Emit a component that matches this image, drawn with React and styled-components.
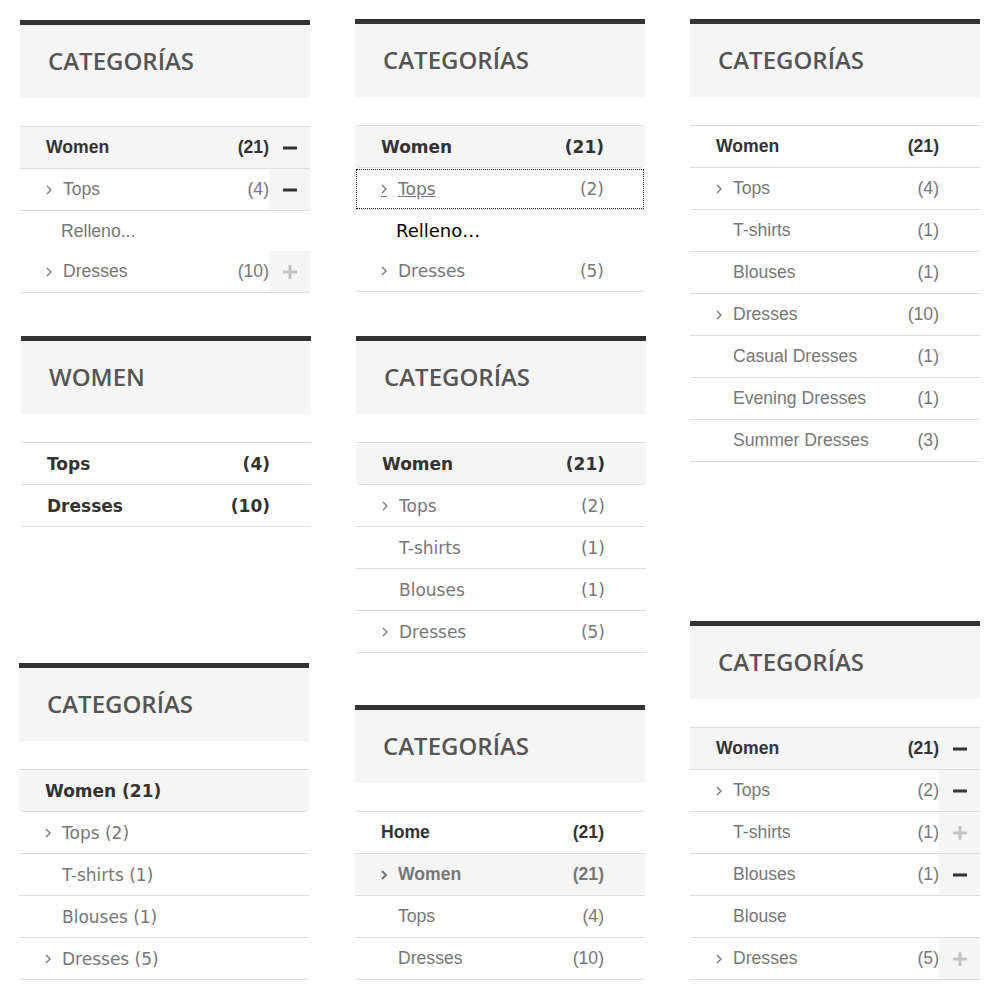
import React from "react";
import styled, { createGlobalStyle } from "styled-components";

const GlobalStyle = createGlobalStyle`
  html, body {
    margin: 0;
    padding: 0;
    background: #fff;
  }
  body {
    font-family: "Liberation Sans", Arial, sans-serif;
  }
`;

const FONTS = {
  arial: { family: `"Liberation Sans", Arial, sans-serif`, size: 17.6 },
  verdana: { family: `"DejaVu Sans", Verdana, sans-serif`, size: 17 },
};

const Page = styled.div`
  display: flex;
  align-items: flex-start;
  gap: 45px;
  padding: 0 20px;
`;

const Column = styled.div`
  display: flex;
  flex-direction: column;
  width: 290px;
`;

const Widget = styled.section`
  width: 290px;
  margin-top: ${(p) => p.$mt}px;
  margin-left: ${(p) => p.$ml || 0}px;
`;

const WidgetTitle = styled.h3`
  box-sizing: border-box;
  display: flex;
  align-items: center;
  height: 78px;
  margin: 0;
  padding: 0 28px 3px;
  border-top: 5px solid #333;
  background: #f5f5f5;
  font: 600 24px "Open Sans", "DejaVu Sans", sans-serif;
  color: #555;
  text-transform: uppercase;
`;

const List = styled.ul`
  list-style: none;
  margin: 28px 0 0;
  padding: 0;
  border-top: 1px solid #ddd;
  font-family: ${(p) => FONTS[p.$font].family};
  font-size: ${(p) => FONTS[p.$font].size}px;
`;

const Row = styled.li`
  display: flex;
  align-items: center;
  height: ${(p) => (p.$plain ? 40 : 41)}px;
  padding-left: 26px;
  border-bottom: ${(p) => (p.$plain ? "none" : "1px solid #ddd")};
  border-radius: ${(p) => (p.$rounded ? "5px" : "0")};
  background: ${(p) => (p.$active || p.$rounded ? "#f5f5f5" : "transparent")};
  outline: ${(p) => (p.$focus ? "1px dotted #222" : "none")};
  outline-offset: -2px;
`;

const Label = styled.span`
  flex: 1;
  display: flex;
  align-items: center;
  padding-left: ${(p) => p.$indent || 0}px;
  color: ${(p) => p.$color};
  font-weight: ${(p) => (p.$bold ? 700 : 400)};
  font-size: ${(p) => (p.$size ? `${p.$size}px` : "inherit")};
  white-space: nowrap;
`;

const Name = styled.span`
  text-decoration: ${(p) => (p.$underline ? "underline" : "none")};
`;

const Chevron = styled.span`
  display: inline-flex;
  width: 6px;
  margin-right: 11px;
  color: #777;
  border-bottom: ${(p) => (p.$underline ? "1px solid #777" : "none")};
  padding-bottom: ${(p) => (p.$underline ? "2px" : "0")};
  margin-top: ${(p) => (p.$underline ? "3px" : "0")};
`;

const Count = styled.span`
  color: ${(p) => p.$color};
  font-weight: ${(p) => (p.$bold ? 700 : 400)};
`;

const Toggle = styled.span`
  align-self: stretch;
  display: flex;
  align-items: center;
  justify-content: center;
  width: 41px;
  flex: none;
  background: ${(p) => (p.$shade ? "#f5f5f5" : "transparent")};
`;

function ChevronIcon({ bold }) {
  return (
    <svg width="6" height="10" viewBox="0 0 6 10">
      <polyline
        points="1,1 5,5 1,9"
        fill="none"
        stroke="currentColor"
        strokeWidth={bold ? 2.2 : 1.3}
      />
    </svg>
  );
}

function ToggleIcon({ kind }) {
  const color = kind === "minus" ? "#333" : "#c4c4c4";
  return (
    <svg width="14" height="14" viewBox="0 0 14 14">
      <rect x="0" y="5.5" width="14" height="3" fill={color} />
      {kind === "plus" && <rect x="5.5" y="0" width="3" height="14" fill={color} />}
    </svg>
  );
}

const DARK = "#333";
const GREY = "#777";

const col1 = [
  {
    title: "Categorías",
    font: "arial",
    mt: 20,
    rows: [
      { name: "Women", count: 21, bold: true, active: true, toggle: "minus" },
      { name: "Tops", count: 4, chevron: true, toggle: "minus", shade: true },
      { name: "Relleno...", plain: true, indent: 15 },
      { name: "Dresses", count: 10, chevron: true, toggle: "plus", shade: true },
    ],
  },
  {
    title: "Women",
    font: "verdana",
    mt: 43,
    ml: 1,
    rows: [
      { name: "Tops", count: 4, bold: true },
      { name: "Dresses", count: 10, bold: true },
    ],
  },
  {
    title: "Categorías",
    font: "verdana",
    mt: 136,
    ml: -1,
    rows: [
      { name: "Women (21)", bold: true, rounded: true },
      { name: "Tops (2)", chevron: true },
      { name: "T-shirts (1)", child: true },
      { name: "Blouses (1)", child: true },
      { name: "Dresses (5)", chevron: true },
    ],
  },
];

const col2 = [
  {
    title: "Categorías",
    font: "verdana",
    mt: 19,
    rows: [
      { name: "Women", count: 21, bold: true, rounded: true },
      { name: "Tops", count: 2, chevron: true, focus: true, underline: true },
      { name: "Relleno…", plain: true, indent: 15, color: "#000", size: 18 },
      { name: "Dresses", count: 5, chevron: true },
    ],
  },
  {
    title: "Categorías",
    font: "verdana",
    mt: 44,
    ml: 1,
    rows: [
      { name: "Women", count: 21, bold: true, rounded: true },
      { name: "Tops", count: 2, chevron: true },
      { name: "T-shirts", count: 1, child: true },
      { name: "Blouses", count: 1, child: true },
      { name: "Dresses", count: 5, chevron: true },
    ],
  },
  {
    title: "Categorías",
    font: "arial",
    mt: 52,
    rows: [
      { name: "Home", count: 21, bold: true },
      { name: "Women", count: 21, chevron: true, bold: true, color: GREY, active: true },
      { name: "Tops", count: 4, child: true },
      { name: "Dresses", count: 10, child: true },
    ],
  },
];

const col3 = [
  {
    title: "Categorías",
    font: "arial",
    mt: 19,
    rows: [
      { name: "Women", count: 21, bold: true },
      { name: "Tops", count: 4, chevron: true },
      { name: "T-shirts", count: 1, child: true },
      { name: "Blouses", count: 1, child: true },
      { name: "Dresses", count: 10, chevron: true },
      { name: "Casual Dresses", count: 1, child: true },
      { name: "Evening Dresses", count: 1, child: true },
      { name: "Summer Dresses", count: 3, child: true },
    ],
  },
  {
    title: "Categorías",
    font: "arial",
    mt: 159,
    rows: [
      { name: "Women", count: 21, bold: true, active: true, toggle: "minus" },
      { name: "Tops", count: 2, chevron: true, toggle: "minus", shade: true },
      { name: "T-shirts", count: 1, child: true, toggle: "plus", shade: true },
      { name: "Blouses", count: 1, child: true, toggle: "minus", shade: true },
      { name: "Blouse", child: true },
      { name: "Dresses", count: 5, chevron: true, toggle: "plus", shade: true },
    ],
  },
];

function CategoryRow({ row }) {
  const color = row.color || (row.bold ? DARK : GREY);
  const indent = row.indent || (row.child ? 17 : 0);
  return (
    <Row $plain={row.plain} $rounded={row.rounded} $active={row.active} $focus={row.focus}>
      <Label $color={color} $bold={row.bold} $indent={indent} $size={row.size}>
        {row.chevron && (
          <Chevron $underline={row.underline}>
            <ChevronIcon bold={row.bold} />
          </Chevron>
        )}
        <Name $underline={row.underline}>{row.name}</Name>
      </Label>
      {row.count != null && (
        <Count $color={color} $bold={row.bold}>
          ({row.count})
        </Count>
      )}
      <Toggle $shade={row.shade}>{row.toggle && <ToggleIcon kind={row.toggle} />}</Toggle>
    </Row>
  );
}

function CategoryWidget({ block }) {
  return (
    <Widget $mt={block.mt} $ml={block.ml}>
      <WidgetTitle>{block.title}</WidgetTitle>
      <List $font={block.font}>
        {block.rows.map((row, i) => (
          <CategoryRow key={i} row={row} />
        ))}
      </List>
    </Widget>
  );
}

export default function App() {
  return (
    <>
      <GlobalStyle />
      <Page>
        {[col1, col2, col3].map((col, i) => (
          <Column key={i}>
            {col.map((block, j) => (
              <CategoryWidget key={j} block={block} />
            ))}
          </Column>
        ))}
      </Page>
    </>
  );
}
